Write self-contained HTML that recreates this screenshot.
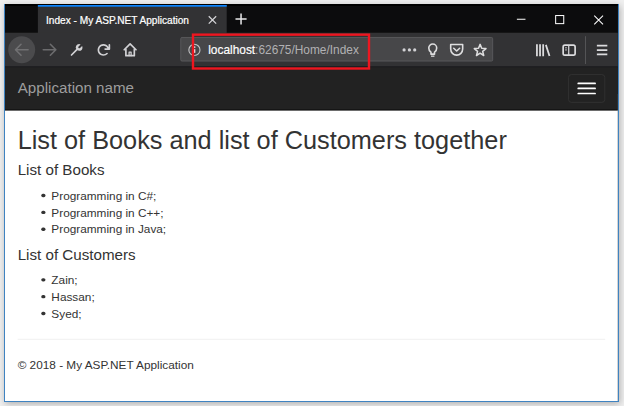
<!DOCTYPE html>
<html><head><meta charset="utf-8"><title>Index - My ASP.NET Application</title>
<style>
html,body{margin:0;padding:0;}
body{width:624px;height:406px;overflow:hidden;background:#f0f0f0;font-family:"Liberation Sans",sans-serif;position:relative;}
#frame{position:absolute;left:4px;top:4px;width:615px;height:398px;box-sizing:border-box;border:1px solid #3f83c1;border-top:none;background:linear-gradient(#000 0,#000 2px,#0c0c0d 2px,#0c0c0d 30px,#222 30px,#222 90px,#fff 90px);box-shadow:1px 2px 7px rgba(0,0,0,.27);overflow:hidden;}
#win{position:absolute;left:0.2px;top:0.6px;width:727px;height:480px;transform-origin:0 0;transform:scale(0.843);overflow:hidden;}
#inner{position:absolute;left:0;top:0;width:727px;height:480px;background:#222;}
/* firefox chrome */
#tabbar{position:absolute;left:0;top:0;width:727px;height:33px;background:linear-gradient(#000 0,#000 1.6px,#0c0c0d 1.7px);}
#tab{position:absolute;left:38.6px;top:0;width:224.5px;height:34px;background:#323234;border-top:2px solid #0a84ff;box-sizing:border-box;}
#tab span{position:absolute;left:10px;top:9.3px;font-size:12.0px;color:#fff;white-space:nowrap;-webkit-text-stroke:0.25px #fff;}
#toolbar{position:absolute;left:0;top:33px;width:727px;height:41px;background:#323234;border-bottom:1px solid #0c0c0d;box-sizing:border-box;}
#back{position:absolute;left:4px;top:4px;width:32px;height:32px;border-radius:50%;background:#505052;}
#url{position:absolute;left:207.7px;top:5.2px;width:371.7px;height:29.3px;background:#474749;border:1px solid #5d5d5f;border-radius:2px;box-sizing:border-box;}
#url span{position:absolute;left:32.4px;top:6px;font-size:14.1px;color:#b1b1b3;white-space:nowrap;}
#url b{font-weight:normal;color:#fff;-webkit-text-stroke:0.2px #fff;}
#red{position:absolute;left:223px;top:34px;width:214px;height:44px;border:3px solid #e8111a;box-sizing:border-box;}
svg{position:absolute;overflow:visible;}
/* page */
#page{position:absolute;left:0;top:74px;width:727px;height:406px;color:#333;font-size:14px;line-height:20px;}
#nav{position:absolute;left:0;top:0;width:727px;height:50.6px;background:#222;border-bottom:1px solid #080808;box-sizing:border-box;}
#nav .brand{position:absolute;left:15px;top:13.8px;font-size:18px;line-height:20px;color:#9d9d9d;white-space:nowrap;}
#toggle{position:absolute;right:15px;top:8px;width:44px;height:34px;border:1px solid #333;border-radius:4px;box-sizing:border-box;padding:9px 10px;}
#toggle i{display:block;width:22px;height:2px;background:#fff;border-radius:1px;}
#toggle i+i{margin-top:4px;}
#body{position:absolute;left:0;top:50px;width:727px;height:356px;padding:0 15px;box-sizing:border-box;background:#fff;}
h2{margin:20px 0 10px;font-weight:normal;font-size:30px;line-height:33px;white-space:nowrap;color:#333;}
h4{margin:10px 0;font-weight:normal;font-size:18px;line-height:19.8px;color:#333;}
ul{margin:0 0 10px;padding-left:40px;list-style:none;position:relative;top:-1.0px;}
li{position:relative;}
li:before{content:"";position:absolute;left:-11.6px;top:8.1px;width:4.6px;height:4.6px;border-radius:50%;background:#333;}
hr{margin:20px 0;border:0;border-top:1px solid #eee;position:relative;top:-1.1px;}
p{margin:0 0 10px;position:relative;top:-1.1px;}
</style></head><body>
<div id="frame"><div id="win"><div id="inner">
 <div id="tabbar"><div id="tab"><span>Index - My ASP.NET Application</span></div></div>
 <div id="toolbar"><div id="url"><span><b>localhost</b>:62675/Home/Index</span></div></div>

 <svg id="chrome" width="727" height="74" viewBox="0 0 727 74" style="left:0;top:0">
  <!-- tab close / new tab -->
  <path d="M241.700 13.300l8.800 8.800M250.500 13.300l-8.800 8.800" stroke="#d4d4d7" stroke-width="1.500" fill="none"/>
  <path d="M273.4 16.6h13.2M280 10v13.2" stroke="#e6e6e8" stroke-width="1.8" fill="none"/>
  <!-- window controls -->
  <path d="M607.200 16.900h10.200" stroke="#fff" stroke-width="1.300" fill="none"/>
  <rect x="653.200" y="12.500" width="9.600" height="9.600" stroke="#fff" stroke-width="1.200" fill="none"/>
  <path d="M699 12.5l10.4 10.4M709.4 12.5l-10.4 10.4" stroke="#fff" stroke-width="1.200" fill="none"/>
  <!-- back / forward -->
  <circle cx="19.8" cy="53.1" r="16" fill="#4b4b4d"/>
  <path d="M27.4 53.1h-14.5M19 46.6l-6.5 6.5 6.5 6.5" stroke="#717173" stroke-width="1.9" fill="none" stroke-linecap="round" stroke-linejoin="round"/>
  <path d="M45.4 53.1h14.5M53.8 46.6l6.5 6.5-6.5 6.5" stroke="#6c6c6e" stroke-width="1.9" fill="none" stroke-linecap="round" stroke-linejoin="round"/>
  <!-- wrench -->
  <g transform="translate(76.9 45.3)" fill="#d2d2d5"><path d="M14.555 3.2l-2.434 2.436a1.243 1.243 0 1 1-1.757-1.757L12.8 1.445A3.956 3.956 0 0 0 11 1a3.976 3.976 0 0 0-3.434 6.02l-6.273 6.273a1 1 0 1 0 1.414 1.414L8.98 8.434A3.96 3.96 0 0 0 11 9a4 4 0 0 0 4-4 3.956 3.956 0 0 0-.445-1.8z"/></g>
  <!-- reload -->
  <g transform="translate(108.8 45.3)" fill="#d2d2d5"><path d="M15 1a1 1 0 0 0-1 1v2.418A6.995 6.995 0 1 0 8 15a6.954 6.954 0 0 0 4.95-2.05 1 1 0 0 0-1.414-1.414A5.019 5.019 0 1 1 12.549 6H10a1 1 0 0 0 0 2h5a1 1 0 0 0 1-1V2a1 1 0 0 0-1-1z"/></g>
  <!-- home -->
  <g transform="translate(140.4 45.1)" fill="none" stroke="#d2d2d5" stroke-linejoin="round" stroke-linecap="round"><path d="M1 8L8 1l7 7" stroke-width="2"/><path d="M3 7.5V15h10V7.5" stroke-width="2"/><path d="M6.8 15v-4.2h2.4V15" stroke-width="1.5"/></g>
  <!-- info -->
  <circle cx="224.700" cy="53.300" r="6.600" fill="none" stroke="#c4c4c6" stroke-width="1.300"/>
  <path d="M224.900 52.400v4.400" stroke="#f0f0f2" stroke-width="1.700" fill="none"/><circle cx="224.900" cy="49.900" r="1.050" fill="#f0f0f2"/>
  <!-- page actions -->
  <circle cx="473.4" cy="53.3" r="1.9" fill="#d2d2d5"/><circle cx="479.7" cy="53.3" r="1.9" fill="#d2d2d5"/><circle cx="486" cy="53.3" r="1.9" fill="#d2d2d5"/>
  <g fill="none" stroke="#dededf" stroke-width="1.900" stroke-linejoin="round"><path d="M505.300 58.300v-2.300c-1.600-1-2.600-2.900-2.600-5a4.700 4.700 0 0 1 9.400 0c0 2.100-1 4-2.600 5v2.300z"/><path d="M505.400 60.700h4" stroke-width="1.500"/>
  <path d="M528.700 46.900h14.200v5.400a7.100 7.100 0 0 1-14.200 0z"/><path d="M532.300 51.300l3.500 3.300 3.500-3.300" stroke-linecap="round"/>
  <path d="M563.60 46.70L565.48 51.41L570.54 51.74L566.64 54.99L567.89 59.91L563.60 57.20L559.31 59.91L560.56 54.99L556.66 51.74L561.72 51.41z" stroke-width="1.800"/></g>
  <!-- library -->
  <path d="M631 46.500v14.200M634.700 46.500v14.200M638.400 46.500v14.200M641.600 47.300l4.300 13.100" stroke="#dcdcde" stroke-width="2.100" fill="none"/>
  <!-- sidebar -->
  <rect x="662.100" y="47.700" width="14.200" height="11.800" rx="2" fill="none" stroke="#dcdcde" stroke-width="2"/><path d="M668.700 47.700v11.800" stroke="#d2d2d5" stroke-width="1.500"/><path d="M664.300 50.800h2.400M664.300 53.300h2.400" stroke="#d2d2d5" stroke-width="1"/>
  <!-- separator -->
  <path d="M688.600 37v33" stroke="#58585a" stroke-width="1.1"/>
  <!-- hamburger -->
  <path d="M702.100 48.300h12.400M702.100 53.500h12.400M702.100 58.700h12.400" stroke="#dcdcde" stroke-width="2.100" fill="none"/>
 </svg>
 <div id="page">
  <div id="body">
   <h2>List of Books and list of Customers together</h2>
   <h4>List of Books</h4>
   <ul><li>Programming in C#;</li><li>Programming in C++;</li><li>Programming in Java;</li></ul>
   <h4>List of Customers</h4>
   <ul><li>Zain;</li><li>Hassan;</li><li>Syed;</li></ul>
   <hr>
   <p>© 2018 - My ASP.NET Application</p>
  </div>
  <div id="nav"><div class="brand">Application name</div>
   <div id="toggle"><i></i><i></i><i></i></div></div>
 </div>
</div></div></div>
<svg width="624" height="406" viewBox="0 0 624 406" style="left:0;top:0;pointer-events:none"><rect x="193" y="34.650" width="176" height="33.850" fill="none" stroke="#ee1620" stroke-width="2.400"/></svg>
</body></html>
